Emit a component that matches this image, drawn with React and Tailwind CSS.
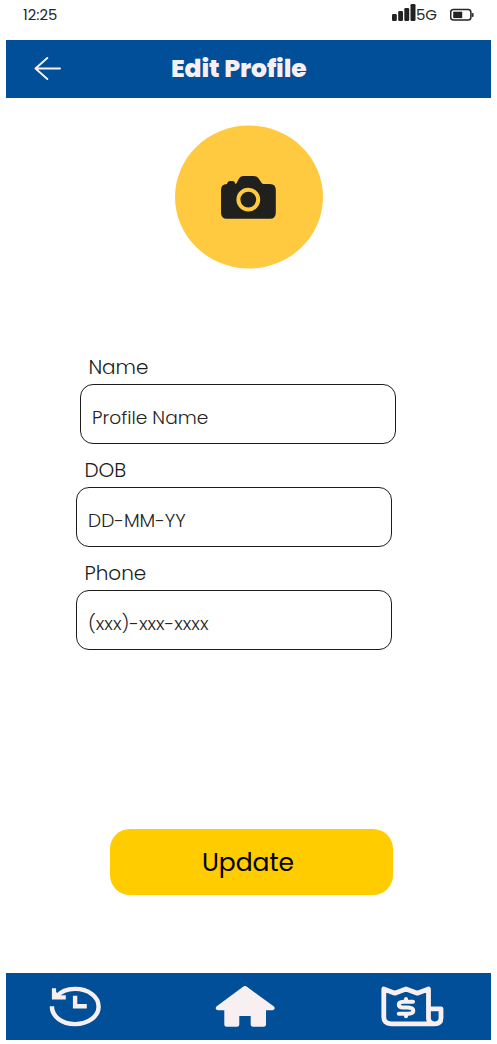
function Field({ label, value, shift }) {
  return (
    <div className={`flex h-[103px] w-[316px] shrink-0 flex-col ${shift}`}>
      <label className="h-[29px] pl-[8.4px] text-[20px] font-light leading-[24px] text-[#1c1c1c]">{label}</label>
      <div className="flex h-[60px] items-center rounded-[13px] border-[1.3px] border-[#1c1c1c] pl-[11px] pt-[8px]">
        <span className="whitespace-nowrap text-[18.6px] font-light leading-[24px] text-[#252525]">{value}</span>
      </div>
    </div>
  );
}

export default function App() {
  return (
    <div className="flex h-[1044px] w-[497px] flex-col bg-white px-[6px] font-['Poppins','Inter',sans-serif]">
      <div className="flex h-[40px] items-start justify-between pl-[17px] pr-[16px] pt-[3px]">
        <span className="pt-[4px] text-[14.8px] leading-[16px] text-[#252525]">12:25</span>
        <div className="flex">
          <svg className="h-[20px] w-[24px]" viewBox="0 0 24 20" fill="#222">
            <rect x="0" y="11" width="4.8" height="7" rx="1.3" />
            <rect x="6.2" y="8" width="4.8" height="10" rx="1.3" />
            <rect x="12.3" y="5" width="4.9" height="13" rx="1.3" />
            <rect x="18.5" y="1" width="5" height="17" rx="1.3" />
          </svg>
          <span className="w-[34px] pt-[4px] text-[15px] leading-[16px] tracking-[-0.2px] text-[#252525]">5G</span>
          <svg className="h-[20px] w-[25px]" viewBox="0 0 25 20">
            <rect x="0.7" y="6.6" width="20.2" height="10.5" rx="2.8" fill="none" stroke="#252525" strokeWidth="1.5" />
            <rect x="3.2" y="8.7" width="9" height="6.4" fill="#222" />
            <rect x="21.6" y="10" width="2" height="4" rx="0.8" fill="#333" />
          </svg>
        </div>
      </div>

      <header className="flex h-[58px] shrink-0 items-center bg-[#004f98]">
        <svg className="ml-[28px] h-[24px] w-[28px]" viewBox="0 0 28 24" fill="none" stroke="#f8f0f0" strokeWidth="1.9" strokeLinecap="round" strokeLinejoin="round">
          <path d="M26 11.5H1.5M13.3 1L1.5 11.5L13.3 22" />
        </svg>
        <h1 className="ml-[109px] whitespace-nowrap text-[25px] font-extrabold leading-[30px] tracking-[-0.1px] text-[#f8f0f0]">Edit Profile</h1>
      </header>

      <div className="flex h-[257px] shrink-0 justify-center pt-[27px]">
        <svg className="h-[144px] w-[148px]" viewBox="0 0 148 144">
          <ellipse cx="74" cy="72" rx="74" ry="71.5" fill="#ffca40" />
          <path d="M52 59C52.8 56.8 53.5 56 55 56H57.5C59.2 56 60 57 60 58.8H61C62.5 57.5 63 54.5 65 52.3Q66.5 51 69 51H78.5Q81.5 51 83.3 53L86 57Q86.8 59 88.5 59H95Q100.8 59 100.8 65V87.8Q100.8 93.8 95 93.8H52Q46 93.8 46 87.8V65Q46 59 52 59Z" fill="#20201f" />
          <circle cx="73.3" cy="74.6" r="9.9" fill="none" stroke="#ffca40" strokeWidth="4" />
        </svg>
      </div>

      <main className="flex h-[474px] shrink-0 flex-col pl-[70px]">
        <Field label="Name" value="Profile Name" shift="ml-[4px]" />
        <Field label="DOB" value="DD-MM-YY" shift="" />
        <Field label="Phone" value="(xxx)-xxx-xxxx" shift="" />
      </main>

      <div className="flex h-[144px] shrink-0 pl-[104px]">
        <button className="h-[66px] w-[283px] rounded-[20px] bg-[#ffcc00] pr-[7px] pt-[2px] text-[25px] leading-[30px] text-black">Update</button>
      </div>

      <nav className="flex h-[67px] shrink-0 items-start bg-[#004f98] pt-[12px]">
        <svg className="ml-[42px] h-[44px] w-[54px]" viewBox="0 0 54 44" fill="none" stroke="#f8f0f0" strokeWidth="4.4">
          <path d="M3.9 21.3C3.9 31.5 13.8 39.1 27 39.1C40.2 39.1 50.6 31.5 50.6 21.5C50.6 11.5 40.2 3.9 27 3.9C19 3.9 12.5 6.8 8.5 11.5" />
          <path d="M6 3.3V12.3H17.8" strokeWidth="4.2" />
          <path d="M7 6L14 12.5H7Z" fill="#f8f0f0" stroke="none" />
          <path d="M27.1 10.7V21.2H38.8" />
        </svg>
        <svg className="ml-[113px] h-[44px] w-[62px]" viewBox="0 0 62 44" fill="#f8f0f0">
          <path d="M27.7 2Q30 0.2 32.3 2L59 21.6Q61 24.8 57.5 25.2H51V39.2Q51 41.7 48.5 41.7H38.2Q35.7 41.7 35.7 39.2V31H24.3V39.2Q24.3 41.7 21.8 41.7H11.8Q9.3 41.7 9.3 39.2V25.2H2.8Q-.5 24.8 1.4 21.6Z" />
        </svg>
        <svg className="ml-[103px] h-[44px] w-[66px]" viewBox="0 0 66 44" fill="none" stroke="#f8f0f0" strokeWidth="4.8" strokeLinecap="round" strokeLinejoin="round">
          <path d="M54.5 38.8H11Q3.8 38.8 3.8 32V4L14.8 8.2L26 4L37.3 8.2L48.5 4V33.5Q48.8 38.8 54.5 38.8Q61 38.8 61 33V23.8H49" />
          <path d="M33 16.8H23.5Q18.8 17 18.8 19.7Q18.8 22.3 23.5 22.5H28Q33.3 22.8 33.3 25.7Q33.3 28.5 28.5 28.7H18.8M26 14V16.5M26 29V31.3" strokeWidth="4" />
        </svg>
      </nav>
    </div>
  );
}
